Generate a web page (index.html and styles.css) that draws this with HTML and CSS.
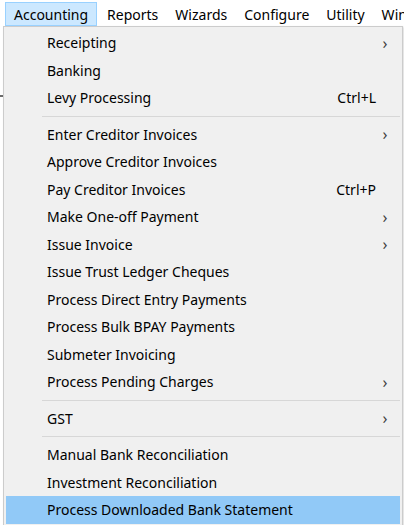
FILE: index.html
```html
<!DOCTYPE html>
<html>
<head>
<meta charset="utf-8">
<link rel="stylesheet" href="styles.css">
</head>
<body>
<div class="menubar">
  <span class="mb-item active">Accounting</span>
  <span class="mb-item">Reports</span>
  <span class="mb-item">Wizards</span>
  <span class="mb-item">Configure</span>
  <span class="mb-item">Utility</span>
  <span class="mb-item">Window</span>
</div>
<div class="backdrop-edge"></div>
<div class="dropdown">
  <div class="item"><span class="label">Receipting</span><span class="arrow">&#x203A;</span></div>
  <div class="item"><span class="label">Banking</span></div>
  <div class="item"><span class="label">Levy Processing</span><span class="shortcut">Ctrl+L</span></div>
  <div class="sep"></div>
  <div class="item"><span class="label">Enter Creditor Invoices</span><span class="arrow">&#x203A;</span></div>
  <div class="item"><span class="label">Approve Creditor Invoices</span></div>
  <div class="item"><span class="label">Pay Creditor Invoices</span><span class="shortcut">Ctrl+P</span></div>
  <div class="item"><span class="label">Make One-off Payment</span><span class="arrow">&#x203A;</span></div>
  <div class="item"><span class="label">Issue Invoice</span><span class="arrow">&#x203A;</span></div>
  <div class="item"><span class="label">Issue Trust Ledger Cheques</span></div>
  <div class="item"><span class="label">Process Direct Entry Payments</span></div>
  <div class="item"><span class="label">Process Bulk BPAY Payments</span></div>
  <div class="item"><span class="label">Submeter Invoicing</span></div>
  <div class="item"><span class="label">Process Pending Charges</span><span class="arrow">&#x203A;</span></div>
  <div class="sep"></div>
  <div class="item"><span class="label">GST</span><span class="arrow">&#x203A;</span></div>
  <div class="sep"></div>
  <div class="item"><span class="label">Manual Bank Reconciliation</span></div>
  <div class="item"><span class="label">Investment Reconciliation</span></div>
  <div class="item selected"><span class="label">Process Downloaded Bank Statement</span></div>
</div>
</body>
</html>
```

FILE: styles.css
```css
html, body {
  margin: 0;
  padding: 0;
  background: #ffffff;
  width: 404px;
  height: 525px;
  overflow: hidden;
  font-family: "Noto Sans", "Open Sans", sans-serif;
  font-size: 14px;
  color: #000;
  position: relative;
}

.menubar {
  display: flex;
  height: 26px;
  padding: 2px 0 0 5px;
  box-sizing: border-box;
  white-space: nowrap;
  overflow: hidden;
}

.mb-item {
  display: flex;
  align-items: center;
  height: 24px;
  padding: 0 7px;
  border: 1px solid transparent;
  box-sizing: border-box;
  margin-right: 1px;
  flex-shrink: 0;
}

.mb-item.active {
  padding: 0 8px;
  margin-right: 2px;
  background: #cce8ff;
  border-color: #99d1ff;
}

.backdrop-edge {
  position: absolute;
  left: 0;
  top: 95px;
  width: 3px;
  height: 2px;
  background: #6b6b6b;
}

.dropdown {
  margin-left: 3px;
  width: 400px;
  box-sizing: border-box;
  background: #f0f0f0;
  border: 1px solid #cccccc;
  padding: 2px 2px 3px;
  box-shadow: 1px 1px 2px rgba(0,0,0,0.15);
}

.item {
  display: flex;
  align-items: center;
  height: 27.5px;
  padding-left: 41px;
  position: relative;
}

.item.selected {
  background: #91c9f7;
}

.label {
  flex: 1;
}

.shortcut {
  margin-right: 24px;
}

.arrow {
  width: 20px;
  margin-right: 5px;
  text-align: center;
  color: #404040;
  font-size: 16px;
}

.sep {
  height: 1px;
  margin: 4px 0 4px 36px;
  background: #d7d7d7;
}
```
